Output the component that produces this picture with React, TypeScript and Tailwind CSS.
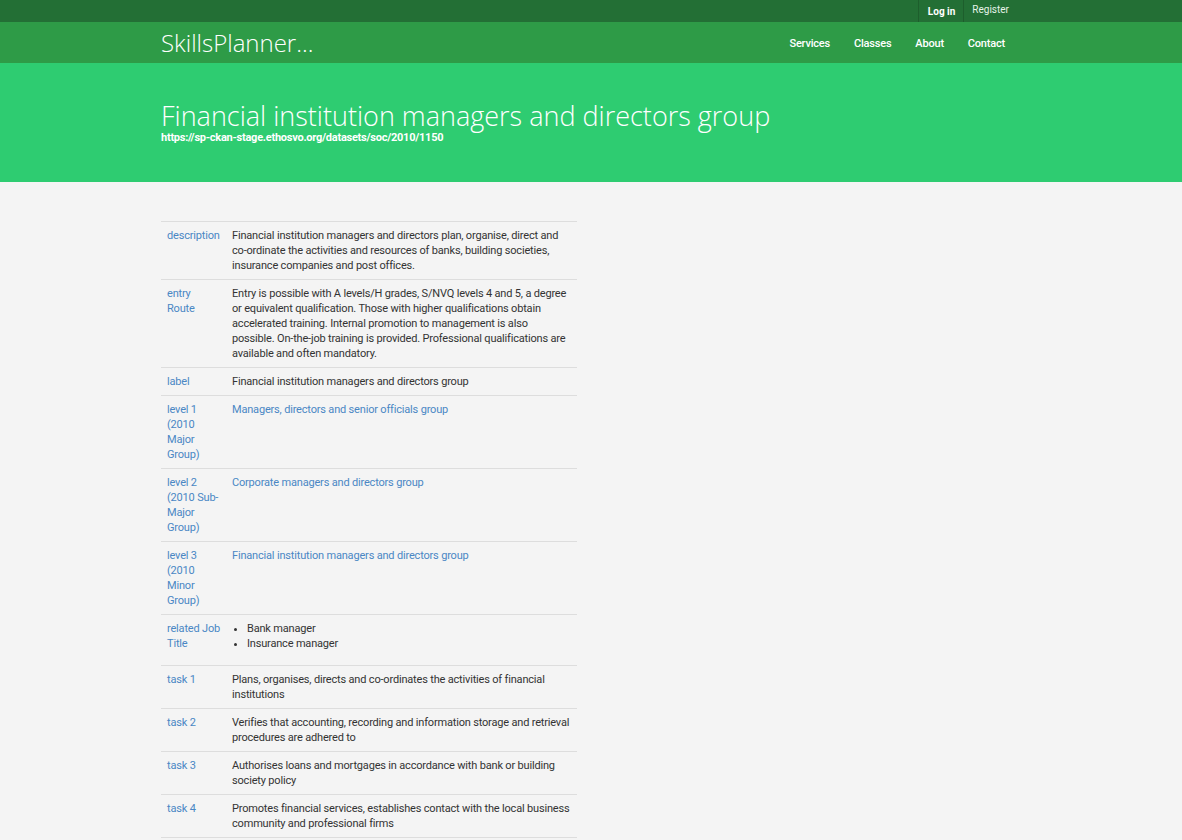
const ROWS: { label: string; value?: string; link?: boolean; list?: string[]; pad?: string }[] = [
  {
    label: "description",
    value:
      "Financial institution managers and directors plan, organise, direct and co-ordinate the activities and resources of banks, building societies, insurance companies and post offices.",
  },
  {
    label: "entry\nRoute",
    pad: "pr-[7px]",
    value:
      "Entry is possible with A levels/H grades, S/NVQ levels 4 and 5, a degree or equivalent qualification. Those with higher qualifications obtain accelerated training. Internal promotion to management is also possible. On-the-job training is provided. Professional qualifications are available and often mandatory.",
  },
  { label: "label", value: "Financial institution managers and directors group" },
  { label: "level 1 (2010 Major Group)", value: "Managers, directors and senior officials group", link: true },
  { label: "level 2 (2010 Sub-Major Group)", value: "Corporate managers and directors group", link: true },
  { label: "level 3 (2010 Minor Group)", value: "Financial institution managers and directors group", link: true },
  { label: "related Job Title", list: ["Bank manager", "Insurance manager"] },
  { label: "task 1", value: "Plans, organises, directs and co-ordinates the activities of financial institutions" },
  {
    label: "task 2",
    value: "Verifies that accounting, recording and information storage and retrieval procedures are adhered to",
  },
  { label: "task 3", value: "Authorises loans and mortgages in accordance with bank or building society policy" },
  {
    label: "task 4",
    value: "Promotes financial services, establishes contact with the local business community and professional firms",
  },
  {
    label: "task 5",
    value: "Ensures compliance with legislation and industry regulations and maintains records",
  },
];

const NAV = ["Services", "Classes", "About", "Contact"];

export default function App() {
  return (
    <div className="min-h-[840px] bg-[#f4f4f4] font-['Roboto',sans-serif] text-[#333]">
      <div className="h-[22px] bg-[#236f35]">
        <div className="mx-auto flex h-full w-[860px] justify-end">
          <div className="flex h-full pr-[4px] text-[10px] text-white">
            <a className="flex items-center border-x border-[#1d5e2c] pl-[9px] pr-[8px] pt-[1px] font-bold">Log in</a>
            <a className="flex items-center px-[8px] pb-[3px] text-[#e6f3e8]">Register</a>
          </div>
        </div>
      </div>

      <div className="h-[41px] bg-[#2e9b47]">
        <div className="mx-auto flex h-full w-[860px] items-center justify-between">
          <div className="font-['Open_Sans',sans-serif] text-[24px] font-light leading-none text-white">
            SkillsPlanner...
          </div>
          <nav className="mr-[4px] flex pt-[3px] text-[11px] font-medium tracking-[-0.2px] text-white">
            {NAV.map((n) => (
              <a key={n} className="px-[12px]">
                {n}
              </a>
            ))}
          </nav>
        </div>
      </div>

      <div className="h-[119px] bg-[#2ecc71]">
        <div className="mx-auto w-[860px] pt-[38px] text-white">
          <h1 className="font-['Open_Sans',sans-serif] text-[27px] font-light leading-[30px]">
            Financial institution managers and directors group
          </h1>
          <div className="mt-[1px] text-[11px] font-bold leading-[12px] tracking-[-0.25px]">
            https://sp-ckan-stage.ethosvo.org/datasets/soc/2010/1150
          </div>
        </div>
      </div>

      <div className="mx-auto w-[860px] pt-[39px]">
        <table className="w-[416px] border-collapse text-left text-[11px] leading-[15px] tracking-[-0.18px]">
          <tbody>
            {ROWS.map((r) => (
              <tr key={r.label} className="border-t border-[#dddddd] align-top">
                <td className="w-[66px] whitespace-pre-line px-[6px] py-[6px] text-[#4a87c4]">{r.label}</td>
                <td className={`py-[6px] pl-[5px] ${r.pad ?? "pr-[4px]"}`}>
                  {r.list ? (
                    <ul className="mb-[8px] list-disc pl-[15px]">
                      {r.list.map((i) => (
                        <li key={i}>{i}</li>
                      ))}
                    </ul>
                  ) : (
                    <span className={r.link ? "text-[#4a87c4]" : ""}>{r.value}</span>
                  )}
                </td>
              </tr>
            ))}
          </tbody>
        </table>
      </div>
    </div>
  );
}
